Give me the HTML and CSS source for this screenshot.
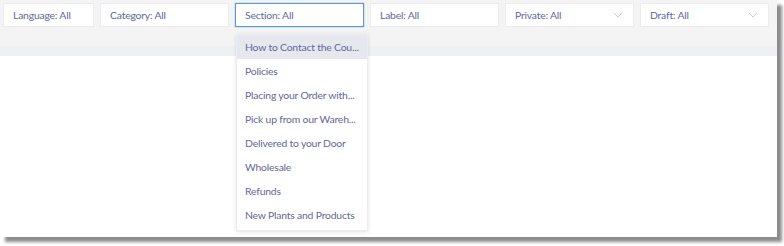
FILE: index.html
```html
<!DOCTYPE html>
<html lang="en">
  <head>
    <meta charset="UTF-8" />
    <title>Filters</title>
    <link rel="stylesheet" href="styles.css">
  </head>

  <body>
    <div class="frame">
      <div class="toolbar">
        <div class="filter language">Language: All</div>
        <div class="filter">Category: All</div>
        <div class="filter focused">Section: All</div>
        <div class="filter">Label: All</div>
        <div class="filter">
          Private: All
          <svg class="chevron" width="10" height="6" viewBox="0 0 10 6"><path d="M1 1l4 4 4-4" fill="none" stroke="#c5c7dc" stroke-width="1"/></svg>
        </div>
        <div class="filter">
          Draft: All
          <svg class="chevron" width="10" height="6" viewBox="0 0 10 6"><path d="M1 1l4 4 4-4" fill="none" stroke="#c5c7dc" stroke-width="1"/></svg>
        </div>
      </div>
      <div class="band"></div>
      <div class="content"></div>

      <!-- section menu, open -->
      <ul class="menu">
        <li class="active">How to Contact the Cou...</li>
        <li>Policies</li>
        <li>Placing your Order with...</li>
        <li>Pick up from our Wareh...</li>
        <li>Delivered to your Door</li>
        <li>Wholesale</li>
        <li>Refunds</li>
        <li>New Plants and Products</li>
      </ul>
    </div>
  </body>
</html>
```

FILE: styles.css
```css
html,
body,
ul,
li {
  margin: 0;
  padding: 0;
}

html,
body {
  height: 246px;
}

body {
  background: #ffffff;
  font-family: Lato, "Liberation Sans", sans-serif;
  font-size: 10.4px;
  letter-spacing: -0.2px;
  color: #63669a;
}

ul,
li {
  list-style: none;
}

.frame {
  position: relative;
  display: flex;
  flex-direction: column;
  width: 777px;
  height: 237px;
  background: #f4f4f5;
  box-shadow: 5px 5px 3px rgba(0, 0, 0, 0.45);
}

.toolbar {
  display: flex;
  gap: 6px;
  height: 43px;
  padding: 3px 8px 0 3px;
}

.filter {
  display: flex;
  align-items: center;
  justify-content: space-between;
  box-sizing: border-box;
  width: 129px;
  height: 24px;
  padding: 0 10px 0 9px;
  background: #ffffff;
  border: 1px solid #ebebf0;
}

.filter.language {
  width: 91px;
}

.filter.focused {
  border-color: #5b95dc;
  box-shadow: 0 0 1px #5b95dc;
}

.band {
  height: 10px;
  background: #eef0f4;
}

.content {
  flex: 1;
  background: #ffffff;
}

.menu {
  position: absolute;
  left: 236px;
  top: 34px;
  width: 130px;
  padding-bottom: 3px;
  background: #ffffff;
  border: 1px solid #ececf2;
  box-shadow: 0 1px 4px rgba(0, 0, 0, 0.12);
}

.menu li {
  height: 24px;
  line-height: 24px;
  padding-left: 8px;
  white-space: nowrap;
}

.menu li.active {
  background: #e6e8f0;
}
```
